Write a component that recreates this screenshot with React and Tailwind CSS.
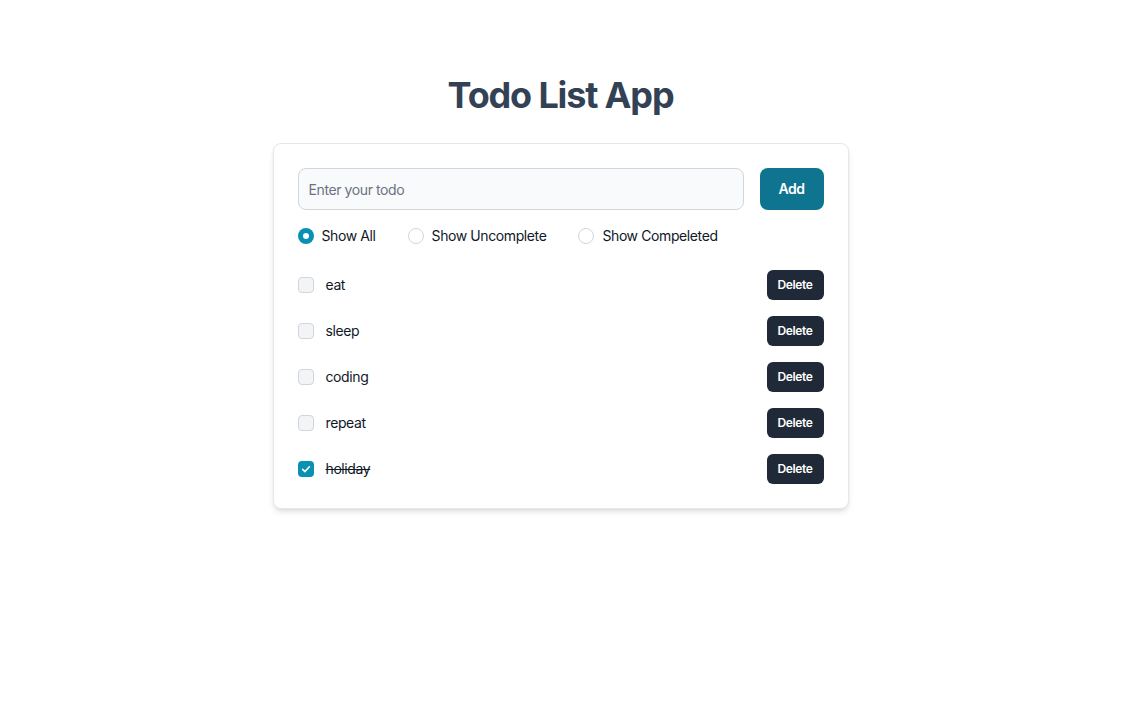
import React, { useState } from "react";

const initialTodos = [
  { id: 1, text: "eat", done: false },
  { id: 2, text: "sleep", done: false },
  { id: 3, text: "coding", done: false },
  { id: 4, text: "repeat", done: false },
  { id: 5, text: "holiday", done: true },
];

const filters = [
  { value: "all", label: "Show All" },
  { value: "uncomplete", label: "Show Uncomplete" },
  { value: "completed", label: "Show Compeleted" },
];

export default function App() {
  const [todos, setTodos] = useState(initialTodos);
  const [text, setText] = useState("");
  const [filter, setFilter] = useState("all");

  const addTodo = () => {
    if (!text.trim()) return;
    setTodos([...todos, { id: Date.now(), text: text.trim(), done: false }]);
    setText("");
  };

  const toggle = (id) =>
    setTodos(todos.map((t) => (t.id === id ? { ...t, done: !t.done } : t)));

  const remove = (id) => setTodos(todos.filter((t) => t.id !== id));

  const shown = todos.filter((t) =>
    filter === "all" ? true : filter === "completed" ? t.done : !t.done
  );

  return (
    <div
      className="min-h-screen bg-white flex flex-col items-center pt-[75px] pr-2 tracking-tight"
      style={{ fontFamily: "Inter, 'Open Sans', sans-serif" }}
    >
      <h1 className="text-4xl font-bold tracking-[-0.032em] text-[#334155] mb-7">Todo List App</h1>

      <div className="w-[576px] bg-white border border-gray-200 rounded-lg shadow-md p-6">
        {/* Input row */}
        <div className="flex gap-4">
          <input
            type="text"
            placeholder="Enter your todo"
            value={text}
            onChange={(e) => setText(e.target.value)}
            className="flex-1 h-[42px] px-2.5 text-sm bg-gray-50 border border-gray-300 rounded-lg text-gray-900 placeholder:text-gray-500 outline-none"
          />
          <button
            onClick={addTodo}
            className="w-16 h-[42px] bg-[#0e7490] text-white text-sm font-semibold rounded-lg"
          >
            Add
          </button>
        </div>

        {/* Filters */}
        <div className="flex items-center gap-8 mt-4 h-5">
          {filters.map((f) => (
            <label key={f.value} className="flex items-center gap-2 cursor-pointer">
              <span
                className={
                  filter === f.value
                    ? "w-4 h-4 rounded-full bg-[#0891b2] flex items-center justify-center"
                    : "w-4 h-4 rounded-full border border-gray-300 bg-white"
                }
                onClick={() => setFilter(f.value)}
              >
                {filter === f.value && <span className="w-1.5 h-1.5 rounded-full bg-white" />}
              </span>
              <span className="text-sm text-gray-900" onClick={() => setFilter(f.value)}>
                {f.label}
              </span>
            </label>
          ))}
        </div>

        {/* Todos */}
        <ul className="mt-6 flex flex-col gap-4">
          {shown.map((t) => (
            <li key={t.id} className="flex items-center justify-between h-[30px]">
              <div className="flex items-center gap-3">
                <span
                  onClick={() => toggle(t.id)}
                  className={
                    t.done
                      ? "w-4 h-4 rounded bg-[#0891b2] flex items-center justify-center cursor-pointer"
                      : "w-4 h-4 rounded border border-gray-300 bg-gray-100 cursor-pointer"
                  }
                >
                  {t.done && (
                    <svg viewBox="0 0 16 16" className="w-3 h-3" fill="none">
                      <path
                        d="M3.5 8.5l3 3 6-6.5"
                        stroke="white"
                        strokeWidth="2"
                        strokeLinecap="round"
                        strokeLinejoin="round"
                      />
                    </svg>
                  )}
                </span>
                <span className={t.done ? "text-sm text-gray-900 line-through" : "text-sm text-gray-900"}>
                  {t.text}
                </span>
              </div>
              <button
                onClick={() => remove(t.id)}
                className="w-[57px] h-[30px] bg-[#1f2937] text-white text-xs font-semibold rounded-md"
              >
                Delete
              </button>
            </li>
          ))}
        </ul>
      </div>
    </div>
  );
}
